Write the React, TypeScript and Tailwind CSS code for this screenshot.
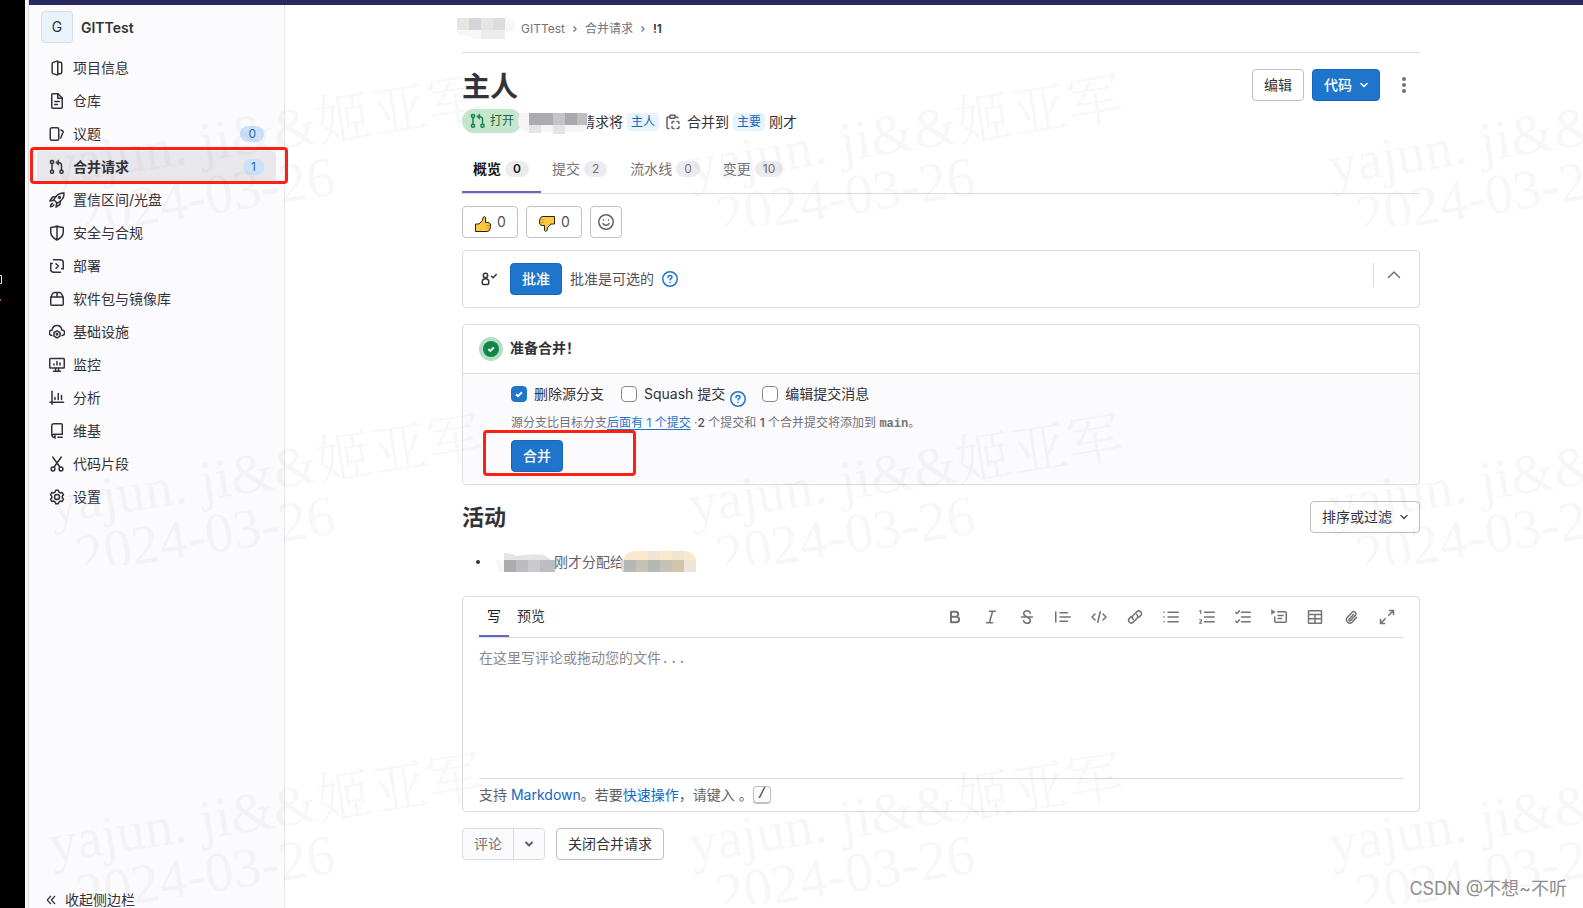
import type { ReactNode } from "react"
import clsx from "clsx"

type IconProps = {
  children: ReactNode
  className?: string
}

const Icon = ({ children, className }: IconProps) => (
  <svg
    viewBox="0 0 16 16"
    fill="none"
    stroke="currentColor"
    strokeWidth="1.5"
    strokeLinecap="round"
    strokeLinejoin="round"
    aria-hidden="true"
    className={clsx("shrink-0", className ?? "h-4 w-4")}
  >
    {children}
  </svg>
)

const mergeIcon = (
  <>
    <circle cx="3" cy="3" r="1.600" />
    <circle cx="3" cy="12.750" r="1.600" />
    <circle cx="12.500" cy="12.750" r="1.600" />
    <path d="M3 4.600v6.500M12.500 11V6a2.250 2.250 0 0 0-2.250-2.250H9.500" />
    <path fill="currentColor" strokeWidth=".8" d="M9.600 1.400v4.700L7 3.750z" />
  </>
)

const navItems = [
  {
    label: "项目信息",
    icon: (
      <>
        <path d="M8.75 .9v14.2l-4.6-1.5a1.5 1.5 0 0 1-1-1.4V3.8a1.5 1.5 0 0 1 1-1.4z" />
        <path d="M8.75 2.25h2.5a1.5 1.5 0 0 1 1.5 1.5v8.5a1.5 1.5 0 0 1-1.5 1.5h-2.5" />
      </>
    ),
  },
  {
    label: "仓库",
    icon: (
      <>
        <path d="M9 .75H3.75a1 1 0 0 0-1 1v12.5a1 1 0 0 0 1 1h8.5a1 1 0 0 0 1-1V5z" />
        <path d="M8.75 1v4.25H13M5.75 8.5h4.5M5.75 11.5H8.5" />
      </>
    ),
  },
  {
    label: "议题",
    count: 0,
    icon: (
      <>
        <rect x="1.25" y="1.75" width="8.5" height="12.5" rx="1.5" />
        <path d="m12 4 1.7 1a1 1 0 0 1 .4 1.2L11.7 12" />
      </>
    ),
  },
  { label: "合并请求", count: 1, active: true, icon: mergeIcon },
  {
    label: "置信区间/光盘",
    icon: (
      <>
        <path d="M15 1c-4.500-.3-7.500 1.500-10.200 6.700l3.500 3.500C13.500 8.500 15.300 5.500 15 1z" />
        <path d="M7 4.750 3.500 5 .9 9l3.900-.8M11.250 9 11 12.500l-4 2.600.8-3.900M3.500 11.250c-1.500.6-2 2-2.100 3.500 1.500 0 2.900-.6 3.500-2" />
        <circle cx="10.500" cy="5.500" r=".9" />
      </>
    ),
  },
  {
    label: "安全与合规",
    icon: (
      <path d="M8 1C5.500 2 3.500 2.300 1.750 2.500v4.800c0 3.500 2.700 6 6.250 7.700 3.550-1.700 6.250-4.200 6.250-7.700V2.500C12.500 2.300 10.500 2 8 1zM8 1v14" />
    ),
  },
  {
    label: "部署",
    icon: (
      <>
        <path d="M4.500 1.750h6.750a3 3 0 0 1 3 3v6M11.500 14.250H4.750a3 3 0 0 1-3-3v-6" />
        <path d="M1.750 5.500h1.500M12.750 10.750h1.500M7 5.750 9.500 8 7 10.250" />
      </>
    ),
  },
  {
    label: "软件包与镜像库",
    icon: (
      <>
        <rect x="1.750" y="6" width="12.500" height="8.250" rx="1" />
        <path d="M1.750 6.500 3.200 3.300A3 3 0 0 1 6 1.500h4a3 3 0 0 1 2.800 1.800l1.450 3.200M8 1.500V6" />
      </>
    ),
  },
  {
    label: "基础设施",
    icon: (
      <>
        <path d="M3 11.500A2.700 2.700 0 0 1 3.200 6C3.500 3.200 5.500 1.500 8 1.500S12.500 3.200 12.800 6a2.700 2.700 0 0 1 .2 5.500" />
        <path d="m8 6.800 3 1.700v3.600l-3 1.800-3-1.800V8.500z" />
        <circle cx="8" cy="10.300" r=".7" />
      </>
    ),
  },
  {
    label: "监控",
    icon: (
      <>
        <rect x=".75" y="1.500" width="14.500" height="9.500" rx=".75" />
        <path d="M6.500 11v3M9.500 11v3M4.500 14.250h7M5 8V7M8 8V4.500M11 8V6" />
      </>
    ),
  },
  {
    label: "分析",
    icon: <path d="M3 1.250v13M.9 12.250h13.600M6 9.500v-2M9.250 9.500v-6M12.500 9.500v-4" />,
  },
  {
    label: "维基",
    icon: (
      <>
        <path d="M13.250 11.250V1.750a1 1 0 0 0-1-1h-7.500a2 2 0 0 0-2 2v9.500" />
        <path d="M13.250 11.250h-8.500a1.500 1.500 0 0 0 0 3h1M9 14.250h4.250M6 12.500v2.750" />
      </>
    ),
  },
  {
    label: "代码片段",
    icon: (
      <>
        <circle cx="4" cy="13" r="1.900" />
        <circle cx="12" cy="13" r="1.900" />
        <path d="M3.750 1 11 11.300M12.250 1 5 11.300" />
      </>
    ),
  },
  {
    label: "设置",
    icon: (
      <>
        <path d="M6.700 1.300h2.600l.7 1.900 1.200.7 2-.4 1.300 2.300L13.200 7.300v1.400l1.300 1.500-1.300 2.300-2-.4-1.200.7-.7 1.900H6.700L6 12.800l-1.200-.7-2 .4-1.300-2.300 1.300-1.500V7.300L1.500 5.800l1.300-2.300 2 .4L6 3.200z" />
        <circle cx="8" cy="8" r="2.500" />
      </>
    ),
  },
]

const tabs = [
  { label: "概览", count: 0, active: true },
  { label: "提交", count: 2 },
  { label: "流水线", count: 0 },
  { label: "变更", count: 10 },
]

const tools = [
  {
    label: "粗体",
    icon: (
      <path
        strokeWidth="2"
        d="M4 2.750h4.700a2.500 2.500 0 0 1 0 5H4zM4 7.750h5.300a2.750 2.750 0 0 1 0 5.500H4z"
      />
    ),
  },
  { label: "斜体", icon: <path d="M6.500 2.250h6M3.500 13.750h6M9.600 2.250 6.400 13.750" /> },
  {
    label: "删除线",
    icon: (
      <path d="M2.500 8h11M11.300 4.200C10.900 2.800 9.700 1.750 8 1.750S4.700 2.900 4.700 4.600C4.700 6.500 6.200 7.300 8 8s3.300 1.600 3.300 3.400S9.800 14.250 8 14.250s-3-1-3.400-2.500" />
    ),
  },
  { label: "引用", icon: <path d="M.75 3v10M5 3.750h7.500M5 8h10.250M5 12.250h7.500" /> },
  {
    label: "代码",
    icon: <path d="M4 5 1 8l3 3M12 5l3 3-3 3M9.250 2.750l-2.500 10.500" />,
  },
  {
    label: "链接",
    icon: (
      <path d="M6.200 10.500c-1.300-1.300-1-3 .1-4.200l3.700-3.700a2.700 2.700 0 0 1 3.800 3.800l-2.100 2.100M9.800 5.500c1.300 1.300 1 3-.1 4.200L6 13.400a2.700 2.700 0 0 1-3.800-3.800l2.100-2.100" />
    ),
  },
  {
    label: "无序列表",
    icon: <path d="M.9 3.250h.2M.9 8h.2M.9 12.750h.2M5 3.250h10.250M5 8h10.250M5 12.750h10.250" />,
  },
  {
    label: "有序列表",
    icon: (
      <>
        <path d="M5.500 3.250h9.750M5.500 8h9.750M5.500 12.750h9.750" />
        <path strokeWidth="1.100" d="M.6 2 1.700 1.400v3.400M.6 10.700h1.900v1.200L.6 14.200h2.200" />
      </>
    ),
  },
  {
    label: "任务列表",
    icon: (
      <path d="M6.500 3.250h8.750M6.500 8h8.750M6.500 12.750h8.750M.8 3.400l1.200 1.100 2.300-2.600M.8 12.400l1.200 1.100 2.300-2.600" />
    ),
  },
  {
    label: "折叠部分",
    icon: (
      <>
        <path d="M6.750 2.750h7.500a1 1 0 0 1 1 1v8.500a1 1 0 0 1-1 1h-9.500a1 1 0 0 1-1-1V8M7 6.500h5M7 9.500h3.500" />
        <path fill="currentColor" strokeWidth=".6" d="M.5 1v4.200L4 3.100z" />
      </>
    ),
  },
  {
    label: "表格",
    icon: (
      <path d="M2 1.750h12a.5.500 0 0 1 .5.500v11.500a.5.500 0 0 1-.5.500H2a.5.500 0 0 1-.5-.5V2.250a.5.500 0 0 1 .5-.5zM1.500 5.500h13M1.500 9.750h13M8 5.500v8.750" />
    ),
  },
  {
    label: "附件",
    icon: (
      <path d="m10.500 5.500-4.300 4.800a.9.900 0 0 0 1.400 1.300l4.800-5.400a2.200 2.200 0 0 0-3.200-3L4 8.800a3.400 3.400 0 0 0 5 4.500l4.500-5" />
    ),
  },
  {
    label: "全屏",
    icon: (
      <path d="M10.500 1.500h4v4M5.500 14.500h-4v-4M14 2 9.750 6.250M2 14l4.250-4.250" />
    ),
  },
]

const HelpIcon = () => (
  <Icon>
    <circle cx="8" cy="8" r="7.250" />
    <path d="M6 6.400c0-1.200.9-1.900 2-1.900s2 .7 2 1.800c0 1.300-2 1.500-2 2.800M8 11.500v.1" />
  </Icon>
)

const ChevronDown = () => (
  <Icon>
    <path d="m5 6.500 3 3 3-3" />
  </Icon>
)

const Crumb = () => (
  <Icon className="mx-1 h-3 w-3">
    <path d="m6.500 5 3 3-3 3" />
  </Icon>
)

const primaryButton =
  "flex h-8 items-center rounded border border-[#1068bf] bg-[#1f75cb] px-[11px] font-medium text-white"
const plainButton =
  "flex h-8 items-center rounded border border-[#bfbfc3] bg-white px-[11px] text-[#333238]"

const Checkbox = ({ id, label, checked }: { id: string; label: string; checked?: boolean }) => (
  <div className="flex items-center gap-[7px]">
    <span className="grid h-4 w-4">
      <input
        id={id}
        type="checkbox"
        defaultChecked={checked}
        className="peer col-start-1 row-start-1 h-4 w-4 appearance-none rounded border border-[#89888d] bg-white checked:border-[#1f75cb] checked:bg-[#1f75cb]"
      />
      <svg
        viewBox="0 0 16 16"
        fill="none"
        stroke="white"
        strokeWidth="2"
        className="pointer-events-none col-start-1 row-start-1 hidden h-4 w-4 peer-checked:block"
      >
        <path d="m5 8.200 2 2 4-4" />
      </svg>
    </span>
    <label htmlFor={id}>{label}</label>
  </div>
)

const Sidebar = () => (
  <aside className="flex w-64 shrink-0 flex-col border-r border-[#e6e6ea] bg-[#fbfafd] text-[#333238]">
    <a href="#project" className="mx-3 mt-1.5 flex h-8 items-center gap-2">
      <span className="flex h-8 w-8 items-center justify-center rounded border border-[#d3dfe9] bg-[#e9f3fc] text-sm">
        G
      </span>
      <span className="pt-0.5 font-semibold">GITTest</span>
    </a>
    <ul className="mt-[9px] flex flex-col gap-0.5 px-2">
      {navItems.map((item) => (
        <li key={item.label} className="relative">
          <a
            href="#nav"
            className={clsx(
              "flex h-[31px] items-center rounded px-3",
              item.active && "bg-[#e8e7ec] font-bold"
            )}
          >
            <Icon className="mr-2 h-4 w-4">{item.icon}</Icon>
            <span className="grow">{item.label}</span>
            {item.count !== undefined && (
              <span className="rounded-full bg-[#cbe2f9] px-2 text-xs font-normal leading-4 text-[#2f68b4]">
                {item.count}
              </span>
            )}
          </a>
          {item.active && (
            <span className="pointer-events-none absolute -bottom-0.5 -left-[7px] -right-3 -top-1 z-10 rounded border-3 border-[#ff2015]" />
          )}
        </li>
      ))}
    </ul>
    <button type="button" className="mt-auto flex h-4 items-center gap-2 pl-4 leading-4">
      <Icon className="h-3 w-3">
        <path d="M7.500 3 3 8l4.500 5M13 3 8.500 8l4.500 5" />
      </Icon>
      收起侧边栏
    </button>
  </aside>
)

const Header = () => (
  <header>
    <nav className="flex h-12 items-center border-b border-[#dcdcde] text-xs text-[#737278]">
      <svg viewBox="0 0 58 21" className="-ml-[5px] mr-1.5 h-[21px] w-[58px]">
        <path fill="#f7f7f7" d="M0 0h50q8 2 8 8-1 7-10 6v7H18L8 17H0z" />
        <path fill="#e6e5e6" d="M0 0h12v12H0zM24 0h12v12H24z" />
        <path fill="#d6d5da" d="M12 0h12v12H12z" />
        <path fill="#dddcdd" d="M36 0h12v12H36z" />
        <path fill="#ececed" d="M24 12h24v9H24z" />
      </svg>
      <a href="#project">GITTest</a>
      <Crumb />
      <a href="#requests">合并请求</a>
      <Crumb />
      <a href="#current" className="font-semibold text-[#333238]">!1</a>
    </nav>
    <div className="mt-4 flex h-9 items-start gap-2">
      <h1 className="grow text-[28px] font-bold leading-9">主人</h1>
      <button type="button" className={plainButton}>编辑</button>
      <button type="button" className={primaryButton}>
        <span className="mr-1">代码</span>
        <span className="-mr-1"><ChevronDown /></span>
      </button>
      <button type="button" aria-label="更多操作" className="flex h-8 w-8 items-center justify-center text-[#737278]">
        <svg viewBox="0 0 16 16" fill="currentColor" className="h-4 w-4">
          <circle cx="8" cy="2" r="2" />
          <circle cx="8" cy="8" r="2" />
          <circle cx="8" cy="14" r="2" />
        </svg>
      </button>
    </div>
    <div className="mt-1 flex h-6 items-center">
      <span className="flex h-6 items-center gap-1 rounded-full bg-[#c3e6cd] pl-2 pr-2 text-xs text-[#24663b]">
        <Icon className="h-4 w-4 text-[#108548]">{mergeIcon}</Icon>
        打开
      </span>
      <svg viewBox="0 0 71 22" className="z-10 -ml-1 mt-1 h-[22px] w-[71px]">
        <path fill="#f5f5f6" d="M4 1h66v11q0 5-6 8H10Q0 18 0 10 0 1 4 1z" />
        <path fill="#acabae" d="M11 1h24v12H11z" />
        <path fill="#c5c4c7" d="M35 1h12v12H35z" />
        <path fill="#a9a8ac" d="M47 1h12v12H47z" />
        <path fill="#bebdc0" d="M59 1h10v12H59z" />
        <path fill="#e4e4e5" d="M11 13h12v8H11zM35 13h12v9H35z" />
      </svg>
      <div className="-ml-2 flex items-center pt-0.5">
        <span>请求将</span>
        <a href="#source" className="ml-1 rounded bg-[#e9f3fc] px-1 text-xs leading-[18px] text-[#1068bf]">主人</a>
        <button type="button" aria-label="复制分支名" className="mx-1.5 text-[#626168]">
          <Icon className="h-4 w-4">
            <path d="M5 3H3a1 1 0 0 0-1 1v9.500a1 1 0 0 0 1 1h1M10 3h2a1 1 0 0 1 1 1M5 1.250h5v3H5z" />
            <path d="M7 9.500V8.500a1 1 0 0 1 1-1h1M12 7.500h1a1 1 0 0 1 1 1v1M14 12.500v1a1 1 0 0 1-1 1h-1M9 14.500H8a1 1 0 0 1-1-1v-1" />
          </Icon>
        </button>
        <span>合并到</span>
        <a href="#target" className="mx-1 rounded bg-[#e9f3fc] px-1 text-xs leading-[18px] text-[#1068bf]">主要</a>
        <span>刚才</span>
      </div>
    </div>
  </header>
)

const Thumb = ({ down }: { down?: boolean }) => (
  <svg viewBox="0 0 16 16" className={clsx("h-4 w-4", down && "rotate-180")} aria-hidden="true">
    <path
      fill="#ffc83d"
      stroke="#2b2112"
      strokeWidth="1"
      strokeLinejoin="round"
      d="M.5 8H4l3.500-3.500L8 1.500Q9.500-.2 10.500 1.500v5H13q2.500.2 2.500 2.500l-.4 4q-.6 2.300-3 2.500H.5z"
    />
    <path stroke="#e08f2c" strokeWidth="1" fill="none" d="M11 9.500h4M11 12h4" />
  </svg>
)

const Approval = () => (
  <section className="mt-3 flex h-[58px] items-center rounded border border-[#dcdcde] pl-4 pr-[13px]">
    <Icon className="mx-0.5 h-4 w-4">
      <circle cx="4.500" cy="4.500" r="2.200" />
      <path d="M4.500 7.700c-2.400 0-3.300 1-3.300 3.300 0 1.800.3 2.500 1.300 2.500h4c1 0 1.300-.7 1.300-2.500 0-2.300-.9-3.300-3.300-3.300zM10.500 5.200l1.600 1.600 3.200-3.300" />
    </Icon>
    <button type="button" className={clsx(primaryButton, "ml-[11px]")}>批准</button>
    <span className="ml-2 text-[#535158]">批准是可选的</span>
    <a href="#help" aria-label="帮助" className="ml-2 text-[#1f75cb]"><HelpIcon /></a>
    <div className="mb-2 ml-auto flex h-6 items-center border-l border-[#dcdcde] pl-2">
      <button type="button" aria-label="折叠" className="flex h-6 w-6 items-center justify-center text-[#737278]">
        <Icon><path d="m2.500 10.500 5.500-5.500 5.500 5.500" /></Icon>
      </button>
    </div>
  </section>
)

const MergeBox = () => (
  <section className="mt-4 rounded border border-[#dcdcde]">
    <div className="flex h-[49px] items-center gap-[7px] border-b border-[#dcdcde] pl-4">
      <svg viewBox="0 0 24 24" className="h-6 w-6" aria-hidden="true">
        <circle cx="12" cy="12" r="12" fill="#b8dcc8" />
        <circle cx="12" cy="12" r="8" fill="#108548" />
        <path d="m9.300 12.200 1.900 1.900 3.600-3.600" fill="none" stroke="white" strokeWidth="1.800" />
      </svg>
      <h2 className="pb-0.5 font-bold">准备合并！</h2>
    </div>
    <div className="rounded-b bg-[#fbfafd] pb-3 pl-12 pt-2.5">
      <div className="flex h-5 items-center">
        <Checkbox id="delete-source" label="删除源分支" checked />
        <span className="w-[17px]" />
        <Checkbox id="squash" label="Squash 提交" />
        <a href="#help" aria-label="帮助" className="ml-[5px] mr-4 mt-2.5 text-[#1f75cb]"><HelpIcon /></a>
        <Checkbox id="edit-message" label="编辑提交消息" />
      </div>
      <p className="mt-[11px] h-4 text-xs leading-4 text-[#737278]">
        源分支比目标分支
        <a href="#commits" className="text-[#1f75cb] underline underline-offset-2">后面有 1 个提交</a>
        {" ·"}
        <span className="font-medium text-[#535158]">2</span> 个提交和{" "}
        <span className="font-medium text-[#535158]">1</span> 个合并提交将添加到{" "}
        <span className="font-['Liberation_Mono',monospace] font-bold">main</span>。
      </p>
      <div className="relative mt-[9px] flex">
        <button type="button" className={primaryButton}>合并</button>
        <span className="pointer-events-none absolute -bottom-1 -left-7 -top-2.5 w-[153px] rounded border-3 border-[#ff2015]" />
      </div>
    </div>
  </section>
)

const Activity = () => (
  <section>
    <div className="mt-4 flex items-center justify-between">
      <h2 className="text-[22px] font-bold leading-8">活动</h2>
      <button type="button" className={plainButton}>
        <span className="mr-1">排序或过滤</span>
        <span className="-mr-1 text-[#535158]"><ChevronDown /></span>
      </button>
    </div>
    <ul className="mt-[18px]">
      <li className="flex h-[21px] items-center text-[#626168]">
        <span className="ml-3.5 mr-4 h-1 w-1 rounded-full bg-[#333238]" />
        <svg viewBox="0 0 60 20" className="z-10 h-5 w-[60px]">
          <path fill="#f7f7f8" d="M0 8h10v12H2z" />
          <path fill="#e4e4e5" d="M8 1q8 0 12 3 18-3 28-1l9 6H8z" />
          <path fill="#acabaf" d="M8 8h12v12H8z" />
          <path fill="#bcbbbf" d="M20 8h12v12H20z" />
          <path fill="#cac9cd" d="M32 8h12v12H32z" />
          <path fill="#bdbcc1" d="M44 8h15v12H44z" />
        </svg>
        <span className="-ml-0.5">刚才分配给</span>
        <svg viewBox="0 0 76 21" className="-ml-1 h-[21px] w-[76px]">
          <path fill="#f9e8cc" d="M3 9q3-9 14-9h49q9 2 10 9z" />
          <path fill="#efe5d5" d="M28 0h12v9H28zM52 0h12v9H52z" />
          <path fill="#dcd9d5" d="M0 9h5v12H2z" />
          <path fill="#b4b9b3" d="M4 9h12v12H4zM28 9h12v12H28z" />
          <path fill="#c4c2b4" d="M16 9h12v12H16zM40 9h12v12H40z" />
          <path fill="#cfc6ac" d="M52 9h12v12H52z" />
          <path fill="#ede4da" d="M64 9h12v12H64z" />
        </svg>
      </li>
    </ul>
  </section>
)

const Editor = () => (
  <form>
    <div className="mt-6 rounded border border-[#dcdcde] px-4">
      <div className="flex h-[41px] border-b border-[#dcdcde]">
        <button type="button" className="h-10 border-b-2 border-[#6666c4] px-2 text-[#18171d]">写</button>
        <button type="button" className="h-10 border-b-2 border-transparent px-2">预览</button>
        <div className="ml-auto mr-1 flex gap-3 text-[#737278]">
          {tools.map((tool) => (
            <button key={tool.label} type="button" aria-label={tool.label} className="flex h-10 w-6 items-center justify-center">
              <Icon className="h-4 w-4">{tool.icon}</Icon>
            </button>
          ))}
        </div>
      </div>
      <textarea
        aria-label="评论"
        placeholder="在这里写评论或拖动您的文件..."
        className="block h-[140px] w-full resize-none py-[11px] font-['Liberation_Mono','Noto_Sans_CJK_SC',monospace] leading-5 outline-none placeholder:text-[#89888d]"
      />
      <div className="flex h-[33px] items-center border-t border-[#dcdcde] text-[#626168]">
        <p>
          支持 <a href="#markdown" className="text-[#1068bf]">Markdown</a>。若要
          <a href="#actions" className="text-[#1068bf]">快速操作</a>，请键入 。
        </p>
        <kbd className="rounded border border-b-2 border-[#bfbfc3] bg-[#fbfafd] px-1 font-['Liberation_Mono',monospace] text-sm leading-[15px] text-[#333238]">/</kbd>
      </div>
    </div>
    <div className="mt-4 flex">
      <button type="button" className="h-8 rounded-l border border-[#dcdcde] bg-[#fbfafd] px-[11px] text-[#737278]">评论</button>
      <button type="button" aria-label="评论选项" className="-ml-px flex h-8 w-8 items-center justify-center rounded-r border border-[#dcdcde] bg-[#fbfafd] text-[#626168]">
        <Icon><path strokeWidth="2" d="m5 6.500 3 3 3-3" /></Icon>
      </button>
      <button type="button" className={clsx(plainButton, "ml-[11px]")}>关闭合并请求</button>
    </div>
  </form>
)

// Repeating user name and date stamp laid over the whole page
const Watermark = () => (
  <svg className="pointer-events-none absolute inset-0 z-20 h-full w-full" aria-hidden="true">
    <defs>
      <pattern id="stamp" x="29" y="-113" width="640" height="339" patternUnits="userSpaceOnUse">
        <g className="fill-black/3 font-['Liberation_Serif','Noto_Serif_CJK_SC','Noto_Sans_CJK_SC',serif] text-[56px] font-light">
          <text transform="translate(23 298) rotate(-9)">yajun. ji&amp;&amp;姬亚军</text>
          <text transform="translate(50 348) rotate(-9)">2024-03-26</text>
        </g>
      </pattern>
    </defs>
    <rect width="100%" height="100%" fill="url(#stamp)" />
  </svg>
)

export default function App() {
  return (
    <div className="relative flex min-h-screen overflow-hidden bg-white font-['Inter','Noto_Sans_CJK_SC',sans-serif] text-sm text-[#333238]">
      <div className="w-[25px] shrink-0 bg-black pt-[275px]">
        <svg viewBox="0 0 3 28" className="h-7 w-[3px]" aria-hidden="true">
          <path d="M0 .5h1.500v8H0" fill="none" stroke="#dde6ff" />
          <path d="M0 24h1v2H0z" fill="#b0561c" />
        </svg>
      </div>
      <div className="w-1 shrink-0 border-r border-[#dcdcde] bg-[#f5f5f7]" />
      <div className="flex min-w-0 grow flex-col">
        <div className="h-[5px] shrink-0 bg-[#292961]" />
        <div className="flex grow">
          <Sidebar />
          <div className="min-w-0 grow pb-8 pl-3.5">
            <main className="mx-auto w-full max-w-[958px]">
              <Header />
              <nav className="mt-[14px] flex border-b border-[#dcdcde]">
                {tabs.map((tab) => (
                  <a
                    key={tab.label}
                    href="#tab"
                    className={clsx(
                      "flex h-[46px] items-center gap-1 border-b-2 pl-[11px] pr-3",
                      tab.active
                        ? "border-[#6666c4] font-bold text-[#18171d]"
                        : "border-transparent text-[#737278]"
                    )}
                  >
                    {tab.label}
                    <span className={clsx("rounded-full bg-[#ececef] px-2 text-xs leading-4", tab.active && "font-semibold")}>
                      {tab.count}
                    </span>
                  </a>
                ))}
              </nav>
              <div className="mt-3 flex gap-2">
                <button type="button" className="flex h-8 w-14 items-center gap-1.5 rounded border border-[#bfbfc3] pl-3 text-[#535158]">
                  <span className="mt-1"><Thumb /></span>0
                </button>
                <button type="button" className="flex h-8 w-14 items-center gap-1.5 rounded border border-[#bfbfc3] pl-3 text-[#535158]">
                  <span className="mt-1"><Thumb down /></span>0
                </button>
                <button type="button" aria-label="添加表情" className="flex h-8 w-8 items-center justify-center rounded border border-[#bfbfc3] text-[#626168]">
                  <Icon>
                    <circle cx="8" cy="8" r="7.250" />
                    <path d="M5.500 6v.3M10.500 6v.3M5 9.500c1 2.300 5 2.300 6 0" />
                  </Icon>
                </button>
              </div>
              <Approval />
              <MergeBox />
              <Activity />
              <Editor />
            </main>
          </div>
        </div>
      </div>
      <Watermark />
      <p className="pointer-events-none absolute bottom-1.5 right-4 z-30 text-lg leading-[26px] text-[#8e8e8e]">
        CSDN @不想~不听
      </p>
    </div>
  )
}
